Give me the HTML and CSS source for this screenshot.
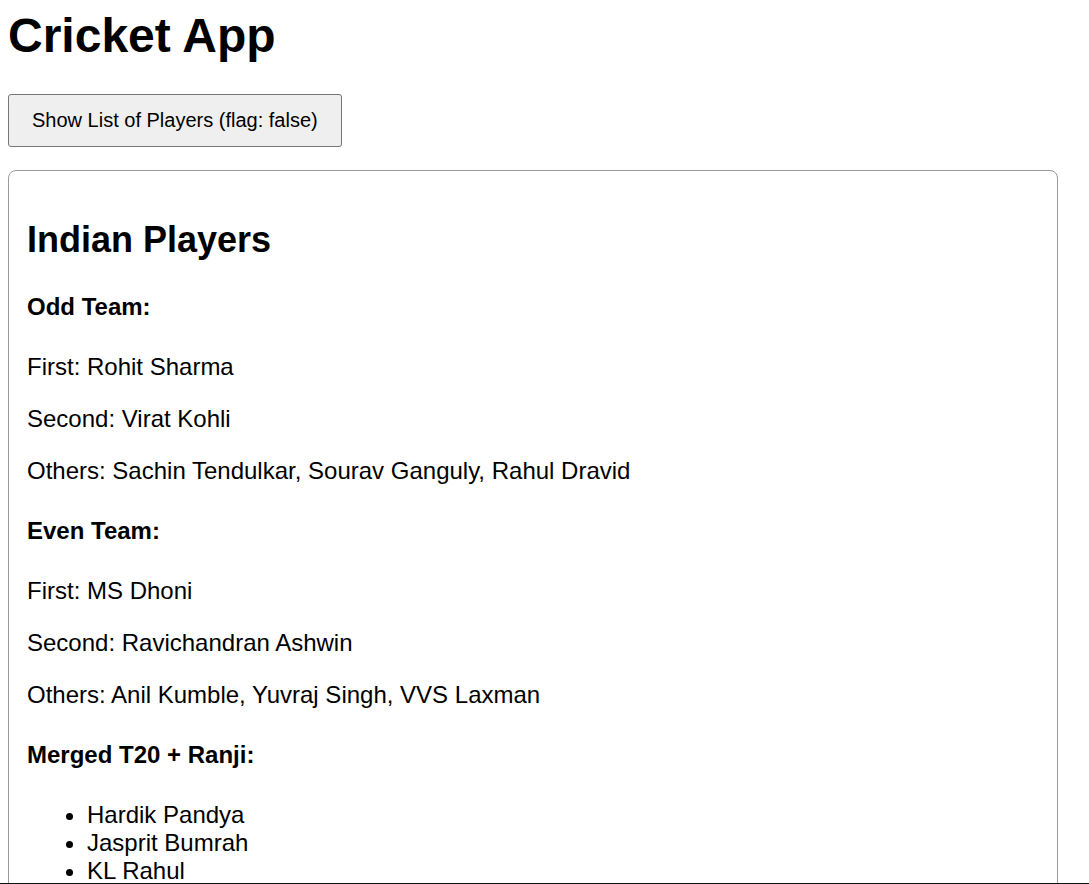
FILE: index.html
```html
<!DOCTYPE html>
<html lang="en">
<head>
<meta charset="utf-8">
<title>Cricket App</title>
<link rel="stylesheet" href="styles.css">
</head>
<body>
<div class="app">
  <h1 class="title">Cricket App</h1>
  <div class="toolbar">
    <button class="toggle" type="button">Show List of Players (flag: false)</button>
  </div>
  <section class="card">
    <h2 class="card-title">Indian Players</h2>
    <h4 class="group-title">Odd Team:</h4>
    <p class="line">First: Rohit Sharma</p>
    <p class="line">Second: Virat Kohli</p>
    <p class="line">Others: Sachin Tendulkar, Sourav Ganguly, Rahul Dravid</p>
    <h4 class="group-title">Even Team:</h4>
    <p class="line">First: MS Dhoni</p>
    <p class="line">Second: Ravichandran Ashwin</p>
    <p class="line">Others: Anil Kumble, Yuvraj Singh, VVS Laxman</p>
    <h4 class="group-title">Merged T20 + Ranji:</h4>
    <ul class="players">
      <li>Hardik Pandya</li>
      <li>Jasprit Bumrah</li>
      <li>KL Rahul</li>
    </ul>
  </section>
</div>
<div class="frame-edge"></div>
</body>
</html>
```

FILE: styles.css
```css
html, body {
  background: #ffffff;
}

body {
  margin: 8px;
  font-family: "Liberation Sans", Arial, sans-serif;
  font-size: 24px;
  color: #000000;
}

.title {
  font-size: 48px;
  font-weight: bold;
  margin: 0 0 31px 0;
}

.toolbar {
  margin: 0 0 23px 0;
}

.toggle {
  display: block;
  font-family: "Liberation Sans", Arial, sans-serif;
  font-size: 20px;
  color: #000000;
  background: #efefef;
  border: 1px solid #767676;
  border-radius: 3px;
  padding: 14px 23px;
  margin: 0;
}

.card {
  box-sizing: border-box;
  max-width: 1050px;
  border: 1px solid #999999;
  border-radius: 8px;
  padding: 18px 18px;
}

.card-title {
  font-size: 36px;
  font-weight: bold;
  margin: 30px 0 30px 0;
}

.group-title {
  font-size: 24px;
  font-weight: bold;
  margin: 32px 0;
}

.line {
  margin: 24px 0;
}

.players {
  margin: 24px 0;
  padding-left: 60px;
}

.frame-edge {
  position: fixed;
  left: 0;
  right: 0;
  bottom: 0;
  height: 1px;
  background: #111111;
}
```
